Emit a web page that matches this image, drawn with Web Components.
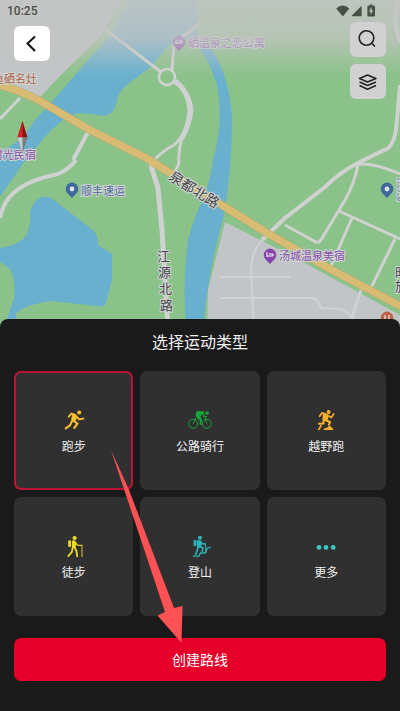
<!DOCTYPE html>
<html lang="zh-CN">
<head>
<meta charset="utf-8">
<meta name="viewport" content="width=device-width, initial-scale=1">
<title>选择运动类型</title>
<style>
  body {
    margin: 0;
    background: #1a1a1a;
    font-family: Roboto, "Noto Sans CJK SC", sans-serif;
  }
</style>
</head>
<body>

<route-page>
  <status-bar slot="status" time="10:25"></status-bar>
  <map-view slot="map"></map-view>
  <icon-button slot="back" solid label="返回">
    <svg width="36" height="36" viewBox="0 0 36 36" fill="none" stroke="#111" stroke-width="2">
      <path d="M21 10.5L13.5 17.5L21 25"/>
    </svg>
  </icon-button>
  <icon-button slot="tools" label="搜索">
    <svg width="36" height="36" viewBox="0 0 36 36" fill="none" stroke="#222" stroke-width="1.6">
      <circle cx="16.5" cy="16" r="7.3"/>
      <path d="M21.5 21L25 24.5"/>
    </svg>
  </icon-button>
  <icon-button slot="tools" label="图层">
    <svg width="36" height="36" viewBox="0 0 36 36" fill="none" stroke="#222" stroke-width="1.5" stroke-linejoin="round">
      <path d="M17.5 11L26 14.5L17.5 18L9.5 14.5Z"/>
      <path d="M9.5 18L17.5 21.5L26 18M9.5 21.5L17.5 25.2L26 21.5"/>
    </svg>
  </icon-button>

  <sport-sheet slot="sheet">
    <span slot="title">选择运动类型</span>

    <sport-tile selected>
      <svg slot="icon" width="24" height="24" viewBox="0 0 24 24" fill="none" stroke="#fbc02d" stroke-width="1.8">
        <circle cx="17.2" cy="4.6" r="2" fill="#fbc02d" stroke="none"/>
        <path d="M10.6 5.3L15.2 7.4L14.6 11.2L12 14.4L9 12.2Z" fill="#fbc02d" stroke="none"/>
        <path d="M14 7.2L9.4 5.6L6.2 9.4M14.3 8.2L17.2 11.4L22.2 10.4" />
        <path d="M11.4 12.4L15.4 15.6L11.8 20.6M10.2 12.6L8 17.4L3 20.9" stroke-width="2.1"/>
      </svg>
      跑步
    </sport-tile>

    <sport-tile>
      <svg slot="icon" width="24" height="24" viewBox="0 0 24 24" fill="none" stroke="#17a43b" stroke-width="1">
        <circle cx="5.2" cy="15.8" r="4.5"/>
        <circle cx="18.8" cy="15.8" r="4.5"/>
        <circle cx="19" cy="5" r="1.8" fill="#17a43b" stroke="none"/>
        <path d="M8 4.4Q8.600 3 10 3L15.400 3.200L16.400 4.800L12.400 8.200L14 11.400L13.400 17L11.800 17L11.600 12.400L8.400 9.200Q7 7.400 8 4.400Z" fill="#17a43b" stroke="none"/>
        <path d="M15.2 5L16 8.400L18.800 8.800" stroke-width="1.300"/>
        <path d="M17 9L18.8 15.8M8 9.600L5.2 15.8"/>
      </svg>
      公路骑行
    </sport-tile>

    <sport-tile>
      <svg slot="icon" width="24" height="24" viewBox="0 0 24 24" fill="none" stroke="#fbb02d" stroke-width="1.7">
        <circle cx="14.6" cy="3.9" r="2" fill="#fbb02d" stroke="none"/>
        <path d="M9 4.6L14.4 6.4L14.2 10.4L12.6 13.6L8.4 12.6Z" fill="#fbb02d" stroke="none"/>
        <path d="M12.4 6.4L8 5L5.2 8.8M13.6 7.4L17.4 9.4L20 5.4"/>
        <path d="M11 11.8L16 14L14.6 17.6M9.6 12.2L9.4 15.6L4.2 15.8" stroke-width="2.1"/>
        <path d="M7.4 17.2L4.4 22" stroke-width="1.6"/>
        <path d="M9.2 22L10.6 20.2L13 19.8L14.8 18L17 18.4L19.8 22Z" fill="#fbb02d" stroke="none"/>
      </svg>
      越野跑
    </sport-tile>

    <sport-tile>
      <svg slot="icon" width="24" height="24" viewBox="0 0 24 24" fill="none" stroke="#efdc20" stroke-width="1.8">
        <circle cx="12.6" cy="4" r="2.1" fill="#efdc20" stroke="none"/>
        <rect x="6.2" y="6.2" width="2.9" height="6.8" rx="1.2" fill="#efdc20" stroke="none"/>
        <path d="M10 6.6L13.2 6.6L14.2 9L13.6 14L10 14.2Z" fill="#efdc20" stroke="none"/>
        <path d="M13 8L15.4 11.2L19.4 11.4" stroke-width="1.3"/>
        <path d="M12.4 13L14.4 17L15.4 23M10.8 13L9.8 18L5.8 22.6"/>
        <path d="M20 10.6V23" stroke-width="0.9"/>
      </svg>
      徒步
    </sport-tile>

    <sport-tile>
      <svg slot="icon" width="24" height="24" viewBox="0 0 24 24" fill="none" stroke="#29b9bd" stroke-width="1.6">
        <circle cx="12" cy="3.8" r="2" fill="#29b9bd" stroke="none"/>
        <rect x="5.6" y="6" width="2.8" height="6" rx="1.2" fill="#29b9bd" stroke="none"/>
        <path d="M9 6.2L12.6 6.2L14 8.8L12.8 13.6L9 13.4Z" fill="#29b9bd" stroke="none"/>
        <path d="M12.6 7.6L14.8 10L17.4 9.8" stroke-width="1.3"/>
        <path d="M10.4 12.4L14.8 13.6L14.2 18M9.8 12.6L9.4 16.4L7.4 20.8"/>
        <path d="M17.4 9L18 18.6" stroke-width="1"/>
        <path d="M5 22.2L11 22.2L12.4 19L17.4 18.8L19 14.6L20.4 13.8L22.8 13.4" stroke-width="1.3"/>
      </svg>
      登山
    </sport-tile>

    <sport-tile>
      <svg slot="icon" width="24" height="24" viewBox="0 0 24 24" fill="#3cc6c4">
        <circle cx="5" cy="13.4" r="2.4"/>
        <circle cx="12" cy="13.4" r="2.4"/>
        <circle cx="19.2" cy="13.4" r="2.4"/>
      </svg>
      更多
    </sport-tile>

    <span slot="action">创建路线</span>
  </sport-sheet>
</route-page>

<template id="route-page">
  <style>
    :host {
      display: flex;
      flex-direction: column;
      min-height: 100vh;
    }
    .map {
      position: relative;
      flex: 1 0 auto;
      min-height: 319px;
    }
    /* the map lies behind the bar and the buttons */
    slot[name="map"]::slotted(*) {
      position: absolute;
      inset: 0 0 -10px;
    }
    .over {
      position: relative;
    }
    .controls {
      display: flex;
      justify-content: space-between;
      align-items: flex-start;
      padding: 0 14px;
    }
    .back {
      padding-top: 4px;
    }
    .tools {
      display: flex;
      flex-direction: column;
      gap: 7px;
    }
  </style>
  <section class="map">
    <slot name="map"></slot>
    <div class="over">
      <slot name="status"></slot>
      <div class="controls">
        <div class="back"><slot name="back"></slot></div>
        <div class="tools"><slot name="tools"></slot></div>
      </div>
    </div>
  </section>
  <slot name="sheet"></slot>
</template>

<template id="status-bar">
  <style>
    :host {
      display: flex;
      justify-content: space-between;
      align-items: center;
      height: 22px;
      padding: 0 24px 0 7px;
      color: #4c4f4c;
      font-size: 12px;
      font-weight: 500;
      line-height: 22px;
    }
    svg { display: block; }
  </style>
  <span class="time"></span>
  <svg width="40" height="14" viewBox="0 0 40 14" fill="#465046">
    <path d="M0.2 4.6Q6.8 -1.4 13.4 4.6L6.8 12.4Z"/>
    <path d="M25.6 1.8V12.2H15.2Z"/>
    <path d="M32.2 1.8H33.6V0.6H36.6V1.8H38.2Q39 1.8 39 2.6V11.8Q39 12.4 38.2 12.4H32.2Q31.4 12.4 31.4 11.8V2.6Q31.4 1.8 32.2 1.8Z"/>
    <path d="M35 3.6L33 7.6H34.6V10.8L37.2 6.6H35.6V3.6Z" fill="#bcc6bc"/>
  </svg>
</template>

<template id="icon-button">
  <style>
    :host { display: block; }
    button {
      display: block;
      width: 36px;
      height: 35px;
      padding: 0;
      border: 0;
      border-radius: 6px;
      background: #d0d1d0;
      overflow: hidden;
      cursor: pointer;
    }
    :host([solid]) button { background: #fff; }
  </style>
  <button type="button"><slot></slot></button>
</template>

<template id="map-view">
  <style>
    :host { display: block; background: #8bc28a; }
    svg { display: block; width: 100%; height: 100%; }
    .road { fill: none; stroke: #cfd2d0; stroke-width: 4; stroke-linejoin: round; }
    .wide { stroke-width: 5; }
    .thin { stroke-width: 3; }
    .lane { stroke-width: 2; stroke: #d0d3d4; }
    .water { fill: #69b0cf; }
    .land { fill: #c1c5c7; }
    text {
      font-size: 11px;
      paint-order: stroke;
      stroke: #d0d6d3;
      stroke-width: 2px;
      stroke-linejoin: round;
    }
    .street { font-size: 13px; fill: #47464c; }
    .main { font-size: 14px; }
    .shop { fill: #50699b; }
    .hotel { fill: #8a4fab; }
    .food { fill: #b25f46; }
  </style>
  <svg viewBox="0 0 400 329" preserveAspectRatio="xMidYMin slice" role="img" aria-label="地图">
    <defs>
      <linearGradient id="fade" x1="0" y1="0" x2="0" y2="1">
        <stop offset="0" stop-color="#c3c5c3" stop-opacity="0.9"/>
        <stop offset="0.5" stop-color="#c3c5c3" stop-opacity="0.75"/>
        <stop offset="1" stop-color="#c3c5c3" stop-opacity="0"/>
      </linearGradient>
      <path id="pin" d="M0 9L-4.6 4.2A6.3 6.3 0 1 1 4.6 4.2Z"/>
    </defs>
    <rect width="400" height="329" fill="#8bc28a"/>

    <path class="land" d="M0 0H121L102 35L66 70L40 97L0 82Z"/>
    <path class="land" d="M225 222L290 255L400 315V329H207L208 290Z"/>

    <!-- river and lakes -->
    <path class="water" d="M129 0H197L197 32L213 51Q230 80 232 118Q232 170 224 215Q208 270 203 329H186Q182 280 188 240Q194 216 205 195Q212 170 213 160Q224 120 217 85Q210 62 200 50L182 36L165 49L152 66L128 84Q117 93 117 101Q114 114 105 116Q93 114 80 113Q68 115 58 124Q44 136 33 152L22 165L0 197V152Q22 142 34 121L50 104L82 67L110 36Z"/>
    <path class="water" d="M0 248Q22 244 27 234Q31 222 30 212Q34 199 42 197Q50 196 55 201L94 231Q98 236 98 245L112 254V280L106 303Q104 308 97 306L50 301Q28 304 16 313V329H4Q10 310 14 298Q16 280 10 269Q2 263 0 262Z"/>

    <!-- small roads -->
    <g class="road thin">
      <path d="M0 119L20 98"/>
      <path d="M105 29L161 72"/>
      <path d="M172 70L174 44L200 23"/>
      <path d="M174 82Q187 90 189 110Q187 134 174 145Q158 153 150 166M176 80Q190 92 192 110Q190 128 181 141Q178 155 179 163L174 174"/>
      <path d="M358 165Q354 185 345 200L321 240Q318 244 314 241L285 225M339 211L400 239M352 218L331 266M395 239L371 288M361 290L348 329"/>
      <path d="M358 164Q376 163 400 174"/>
    </g>
    <circle cx="167" cy="77" r="8" fill="#8bc28a" stroke="#d2d4d3" stroke-width="2.5"/>
    <path class="road" d="M88 132L73 160M76 160Q68 170 58 174Q33 179 20 188Q4 198 0 218"/>
    <path class="road wide" d="M151 166L158 188L162 230L168 329"/>
    <path class="road" d="M400 85Q398 110 396 130Q393 148 384 150L358 163Q340 172 325 187L285 218L262 240"/>
    <path class="road" d="M398 0Q392 20 400 42"/>
    <path class="road lane" d="M267 237Q252 246 251 270L254 329M220 277H290M220 298H313Q318 300 321 308L340 309Q348 312 356 320"/>

    <!-- main road -->
    <path d="M-4 84Q20 90 40 101L88 129L148 159L212 199L267 233L330 269L404 308" fill="none" stroke="#bda96f" stroke-width="8"/>
    <path d="M-4 84Q20 90 40 101L88 129L148 159L212 199L267 233L330 269L404 308" fill="none" stroke="#d8bc73" stroke-width="7"/>

    <text class="street main" transform="translate(168 179) rotate(32)">泉都北路</text>
    <text class="street" x="157" y="261">江</text>
    <text class="street" x="158" y="277">源</text>
    <text class="street" x="159" y="293">北</text>
    <text class="street" x="160" y="310">路</text>

    <text class="food" x="-7" y="83">鱼硒名灶</text>
    <text class="hotel" x="-8" y="159">时光民宿</text>
    <text class="hotel" x="188" y="47">硒温泉之恋公寓</text>
    <text class="shop" x="81" y="195">顺丰速运</text>
    <text class="hotel" x="279" y="260">汤城温泉美宿</text>
    <text class="shop" x="396" y="188">沿</text>
    <text class="shop" x="396" y="200">温</text>
    <text class="street" x="395" y="277">时</text>
    <text class="street" x="395" y="291">旅</text>

    <use href="#pin" x="179" y="42" fill="#8c50b0"/>
    <path d="M176 44V40M176 43H182V41H178" fill="none" stroke="#fff"/>
    <use href="#pin" x="72" y="189" fill="#41689b"/>
    <circle cx="72" cy="189" r="2.4" fill="#dce4ec"/>
    <use href="#pin" x="387" y="189" fill="#41689b"/>
    <circle cx="387" cy="189" r="2.4" fill="#dce4ec"/>
    <use href="#pin" x="270" y="255" fill="#8745ac"/>
    <path d="M267 257V252M267 256H273V254H269" fill="none" stroke="#fff"/>
    <use href="#pin" x="387" y="318" fill="#bb6548"/>
    <path d="M385 315V321M389 315V321" fill="none" stroke="#fff"/>

    <!-- compass needle -->
    <path d="M22.5 121L27.5 137.5H17.5Z" fill="#8f1214"/>
    <path d="M22.5 121V137.5H17.5Z" fill="#d02522"/>
    <path d="M17.5 137.5H27.5L22.5 153Z" fill="#777b80"/>
    <path d="M17.5 137.5H22.5V153Z" fill="#c9cccd"/>

    <rect width="400" height="76" fill="url(#fade)"/>
  </svg>
</template>

<template id="sport-sheet">
  <style>
    :host {
      display: block;
      position: relative;
      padding: 12px 14px 30px;
      border-radius: 8px 8px 0 0;
      background: #1a1a1a;
      color: #f2f2f2;
    }
    h1 {
      margin: 0 0 16px;
      font-size: 16px;
      font-weight: 400;
      line-height: 24px;
      text-align: center;
    }
    .tiles {
      display: grid;
      grid-template-columns: repeat(3, 1fr);
      gap: 7px;
      margin-bottom: 22px;
    }
    .action {
      display: block;
      width: 100%;
      height: 43px;
      padding: 0;
      border: 0;
      border-radius: 7px;
      background: #e60029;
      color: #fff;
      font: inherit;
      font-size: 14px;
      line-height: 20px;
      cursor: pointer;
    }
    .pointer {
      position: absolute;
      top: 131px;
      left: 50%;
      margin-left: -90px;
      pointer-events: none;
    }
  </style>
  <h1><slot name="title"></slot></h1>
  <div class="tiles"><slot></slot></div>
  <button class="action" type="button"><slot name="action"></slot></button>
  <svg class="pointer" width="74" height="194" viewBox="0 0 74 194" fill="#fd5254" aria-hidden="true">
    <path d="M1 0L19 40L64 158L72.5 156L71.5 193L47.5 165.5L55 162L15 42Z"/>
  </svg>
</template>

<template id="sport-tile">
  <style>
    :host { display: block; }
    button {
      display: flex;
      flex-direction: column;
      align-items: center;
      justify-content: center;
      gap: 6px;
      width: 100%;
      height: 119px;
      padding: 2px 0 0;
      border: 2px solid transparent;
      border-radius: 7px;
      background: #303030;
      color: #f0f0f0;
      font: inherit;
      font-size: 12px;
      line-height: 18px;
      cursor: pointer;
    }
    button[aria-pressed="true"] { border-color: #bd1336; }
    slot[name="icon"]::slotted(svg) { display: block; }
  </style>
  <button type="button">
    <slot name="icon"></slot>
    <span><slot></slot></span>
  </button>
</template>

<script>
  // Shared by all elements: clone the template named like the tag
  class TemplateElement extends HTMLElement {
    constructor() {
      super();
      const template = document.getElementById(this.localName);
      this.attachShadow({mode: 'open'});
      this.shadowRoot.appendChild(template.content.cloneNode(true));
    }
  }

  class RoutePage extends TemplateElement {}
  class MapView extends TemplateElement {}

  class StatusBar extends TemplateElement {
    connectedCallback() {
      this.shadowRoot.querySelector('.time').textContent = this.getAttribute('time');
    }
  }

  class IconButton extends TemplateElement {
    connectedCallback() {
      this.shadowRoot.querySelector('button').setAttribute('aria-label', this.getAttribute('label'));
    }
  }

  class SportTile extends TemplateElement {
    static get observedAttributes() {
      return ['selected'];
    }

    connectedCallback() {
      this.update();
    }

    attributeChangedCallback() {
      this.update();
    }

    update() {
      this.shadowRoot.querySelector('button').setAttribute('aria-pressed', this.hasAttribute('selected'));
    }
  }

  class SportSheet extends TemplateElement {
    connectedCallback() {
      // Only one sport can be selected at a time
      this.addEventListener('click', (event) => {
        const picked = event.target.closest('sport-tile');
        if (!picked) return;
        this.querySelectorAll('sport-tile').forEach((tile) => {
          tile.toggleAttribute('selected', tile === picked);
        });
      });
    }
  }

  customElements.define('route-page', RoutePage);
  customElements.define('map-view', MapView);
  customElements.define('status-bar', StatusBar);
  customElements.define('icon-button', IconButton);
  customElements.define('sport-tile', SportTile);
  customElements.define('sport-sheet', SportSheet);
</script>
</body>
</html>
